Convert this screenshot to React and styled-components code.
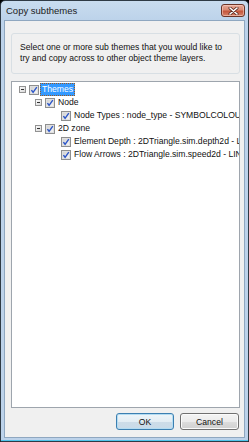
import React from "react";
import styled, { createGlobalStyle } from "styled-components";

const Global = createGlobalStyle`
  html, body { margin: 0; padding: 0; background: #000; }
  body { width: 249px; height: 442px; overflow: hidden; }
  * { box-sizing: border-box; }
`;

const Window = styled.div`
  width: 249px;
  height: 442px;
  display: flex;
  flex-direction: column;
  border: 1px solid #2f3a45;
  border-radius: 5px 5px 0 0;
  background: linear-gradient(#c9dcef, #bcd2ea 20px, #bcd2ea);
  box-shadow: inset 0 -1px 0 #4fc4ea;
  font-family: "Liberation Sans", Arial, sans-serif;
`;

const TitleBar = styled.div`
  height: 19px;
  flex: none;
  display: flex;
  align-items: flex-start;
  justify-content: space-between;
  padding: 0 3px 0 5px;
`;

const Title = styled.span`
  font-size: 9.5px;
  line-height: 19px;
  color: #1b1b1b;
`;

const CloseButton = styled.div`
  margin-top: 3px;
  width: 24px;
  height: 13px;
  border: 1px solid #6b3427;
  border-radius: 3px;
  background: linear-gradient(#e6a997, #d98a73 45%, #c4543a 55%, #d6836a);
  display: flex;
  align-items: center;
  justify-content: center;
  box-shadow: inset 0 0 0 1px rgba(255, 220, 210, 0.5);
`;

const Client = styled.div`
  flex: 1;
  margin: 0 3px 3px 3px;
  border: 1px solid #8fa7c0;
  background: #f0f0f0;
  display: flex;
  flex-direction: column;
  padding: 12px 4px 7px 6px;
`;

const InfoBox = styled.div`
  height: 41px;
  flex: none;
  border: 1px solid #d8dfe4;
  border-radius: 3px;
  padding: 8px 0 0 8px;
  font-size: 8.6px;
  line-height: 11px;
  color: #111;
`;

const TreeBox = styled.div`
  flex: 1;
  margin-top: 7px;
  border: 1px solid #9ea5ad;
  background: #fff;
  padding-top: 1px;
  overflow: hidden;
`;

const Row = styled.div`
  height: 13px;
  display: flex;
  align-items: center;
  padding-left: ${(p) => 7 + p.$level * 16}px;
  white-space: nowrap;
`;

const ExpanderSlot = styled.div`
  width: 10px;
  flex: none;
  display: flex;
  align-items: center;
`;

const CheckSlot = styled.div`
  width: 11px;
  flex: none;
  display: flex;
  align-items: center;
`;

const Label = styled.span`
  font-size: 8.6px;
  line-height: 11px;
  padding: 0 1px 0 1px;
  color: ${(p) => (p.$selected ? "#fff" : "#111")};
  background: ${(p) => (p.$selected ? "#3399ff" : "transparent")};
  border: 1px ${(p) => (p.$selected ? "dotted #9a5a22" : "solid transparent")};
`;

const ButtonRow = styled.div`
  margin-top: 5px;
  display: flex;
  justify-content: flex-end;
  gap: 6px;
  padding-right: 1px;
`;

const Button = styled.div`
  width: ${(p) => p.$w}px;
  height: 17px;
  border-radius: 3px;
  border: 1px solid ${(p) => (p.$default ? "#3c7fb1" : "#707070")};
  background: ${(p) =>
    p.$default
      ? "linear-gradient(#eef5f9, #e3edf4 50%, #cddce8 50%, #c9dbe9)"
      : "linear-gradient(#f4f4f4, #ebebeb 50%, #dddddd 50%, #d0d0d0)"};
  box-shadow: inset 0 0 0 1px ${(p) => (p.$default ? "#b4dcf2" : "#fbfbfb")};
  display: flex;
  align-items: center;
  justify-content: center;
  font-size: 8.6px;
  color: #111;
`;

const Expander = () => (
  <svg width="7" height="7" viewBox="0 0 7 7">
    <defs>
      <linearGradient id="exg" x1="0" y1="0" x2="1" y2="1">
        <stop offset="0" stopColor="#ffffff" />
        <stop offset="1" stopColor="#d4d4d4" />
      </linearGradient>
    </defs>
    <rect x="0.5" y="0.5" width="6" height="6" fill="url(#exg)" stroke="#929292" />
    <line x1="2" y1="3.5" x2="5" y2="3.5" stroke="#333" />
  </svg>
);

const CheckBox = () => (
  <svg width="10" height="10" viewBox="0 0 10 10">
    <defs>
      <linearGradient id="cbg" x1="0" y1="0" x2="1" y2="1">
        <stop offset="0" stopColor="#cfcfcf" />
        <stop offset="1" stopColor="#f7f7f7" />
      </linearGradient>
    </defs>
    <rect x="0.5" y="0.5" width="9" height="9" fill="#f4f4f4" stroke="#8e8f8f" />
    <rect x="1.5" y="1.5" width="7" height="7" fill="url(#cbg)" stroke="#e0e0e0" />
    <path d="M2.4 5.1 L4.1 7.3 L7.8 2.2" fill="none" stroke="#2b55c8" strokeWidth="1.4" />
  </svg>
);

const nodes = [
  { level: 0, text: "Themes", expander: true, selected: true },
  { level: 1, text: "Node", expander: true },
  { level: 2, text: "Node Types : node_type - SYMBOLCOLOUR" },
  { level: 1, text: "2D zone", expander: true },
  { level: 2, text: "Element Depth : 2DTriangle.sim.depth2d - LINEARCOLOUR" },
  { level: 2, text: "Flow Arrows : 2DTriangle.sim.speed2d - LINEARCOLOUR" },
];

export default function App() {
  return (
    <>
      <Global />
      <Window>
        <TitleBar>
          <Title>Copy subthemes</Title>
          <CloseButton>
            <svg width="11" height="8" viewBox="0 0 11 8">
              <path d="M2 1 L9 7 M9 1 L2 7" stroke="#5a2a20" strokeWidth="3" strokeLinecap="round" />
              <path d="M2 1 L9 7 M9 1 L2 7" stroke="#fff" strokeWidth="1.6" strokeLinecap="round" />
            </svg>
          </CloseButton>
        </TitleBar>
        <Client>
          <InfoBox>
            Select one or more sub themes that you would like to
            <br />
            try and copy across to other object theme layers.
          </InfoBox>
          <TreeBox>
            {nodes.map((n, i) => (
              <Row key={i} $level={n.level}>
                <ExpanderSlot>{n.expander && <Expander />}</ExpanderSlot>
                <CheckSlot>
                  <CheckBox />
                </CheckSlot>
                <Label $selected={n.selected}>{n.text}</Label>
              </Row>
            ))}
          </TreeBox>
          <ButtonRow>
            <Button $default $w={58}>OK</Button>
            <Button $w={59}>Cancel</Button>
          </ButtonRow>
        </Client>
      </Window>
    </>
  );
}
